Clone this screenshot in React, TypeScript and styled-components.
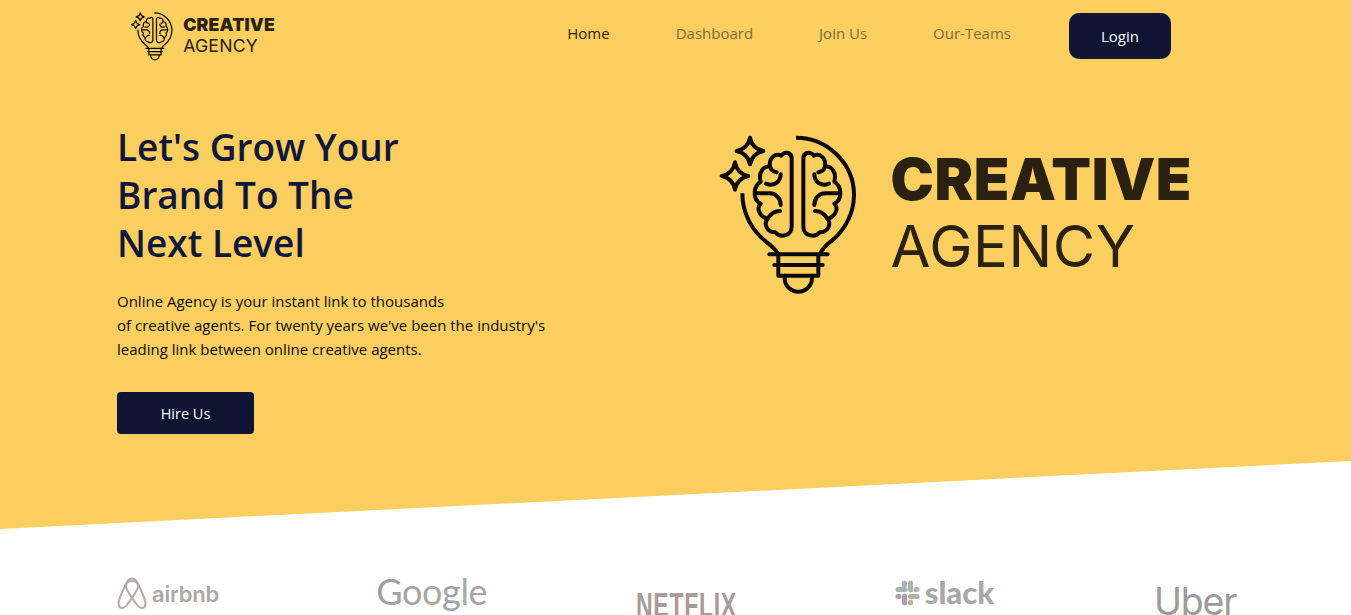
import styled, { createGlobalStyle } from "styled-components";

const navLinks = ["Home", "Dashboard", "Join Us", "Our-Teams"];

const googleLetters = [
    { letter: "G", color: "#9aa1ab" },
    { letter: "o", color: "#a8a3a0" },
    { letter: "o", color: "#aea89c" },
    { letter: "g", color: "#9ca2aa" },
    { letter: "l", color: "#a3aca5" },
    { letter: "e", color: "#aca3a0" },
];

const GlobalStyle = createGlobalStyle`
    html, body {
        margin: 0;
        padding: 0;
        height: 100%;
        overflow: hidden;
        background: #fff;
        font-family: "Open Sans", "Liberation Sans", sans-serif;
    }
    * {
        box-sizing: border-box;
    }
`;

const Page = styled.div`
    width: 100%;
    height: 615px;
    overflow: hidden;
`;

const Hero = styled.section`
    height: 529px;
    background-color: #fbce60;
    clip-path: polygon(0 0, 100% 0, 100% 461px, 0 100%);
`;

const Header = styled.header`
    display: flex;
    height: 72px;
    align-items: center;
    justify-content: space-between;
    padding: 0 180px 0 128px;
`;

const Nav = styled.nav`
    display: flex;
    align-items: center;
`;

const NavLink = styled.a<{ $active?: boolean }>`
    margin-right: 66px;
    font-size: 15px;
    color: ${(p) => (p.$active ? "#2a2414" : "#7d6c3e")};
    text-decoration: none;
    position: relative;
    top: -3px;
    &:nth-child(4) {
        margin-right: 58px;
    }
`;

const LoginButton = styled.button`
    width: 102px;
    height: 46px;
    border: none;
    border-radius: 10px;
    background-color: #0f1432;
    color: #fff;
    font-family: inherit;
    font-size: 15px;
`;

const HeroBody = styled.div`
    display: flex;
    justify-content: space-between;
    padding: 51px 159px 0 117px;
`;

const HeroText = styled.div`
    display: flex;
    flex-direction: column;
    align-items: flex-start;
`;

const Title = styled.h1`
    margin: 0;
    font-size: 37px;
    font-weight: 600;
    line-height: 48px;
    color: #10173a;
`;

const Intro = styled.p`
    margin: 22px 0 0;
    font-size: 15px;
    line-height: 24px;
    color: #0b0b12;
`;

const HireButton = styled.button`
    width: 137px;
    height: 42px;
    margin-top: 31px;
    border: none;
    border-radius: 4px;
    background-color: #0f1432;
    color: #fff;
    font-family: inherit;
    font-size: 14.5px;
`;

const BrandMark = styled.div<{ $scale: number }>`
    display: flex;
    align-items: center;
    gap: ${(p) => 21 * p.$scale}px;
    height: ${(p) => 175 * p.$scale}px;
`;

const HeroMark = styled.div`
    margin-top: 2px;
`;

const BrandWords = styled.div<{ $scale: number }>`
    display: flex;
    flex-direction: column;
    gap: ${(p) => 25 * p.$scale}px;
    font-family: "Inter", "Liberation Sans", sans-serif;
    color: #2a2110;
    font-size: ${(p) => 58 * p.$scale}px;
    line-height: ${(p) => 42 * p.$scale}px;
`;

const BrandTop = styled.span`
    font-weight: 900;
    letter-spacing: 0.01em;
`;

const BrandBottom = styled.span`
    font-weight: 400;
    letter-spacing: 0.01em;
`;

const Clients = styled.div`
    display: flex;
    justify-content: space-between;
    align-items: flex-start;
    padding: 0 117px;
`;

const Client = styled.div<{ $top: number; $color: string; $width: number }>`
    display: flex;
    align-items: center;
    width: ${(p) => p.$width}px;
    margin-top: ${(p) => p.$top}px;
    color: ${(p) => p.$color};
    line-height: 1;
`;

const AirbnbWord = styled.span`
    margin-left: 5px;
    font-family: "Inter", sans-serif;
    font-size: 22px;
    font-weight: 600;
    letter-spacing: -0.01em;
`;

const GoogleWord = styled.span`
    font-family: "Lato", sans-serif;
    font-size: 36px;
    letter-spacing: -0.01em;
`;

const GoogleLetter = styled.span<{ $color: string }>`
    color: ${(p) => p.$color};
`;

const NetflixWord = styled.span`
    display: inline-block;
    font-family: "Liberation Sans", sans-serif;
    font-size: 35px;
    font-weight: 700;
    letter-spacing: 1px;
    white-space: nowrap;
    transform: scaleX(0.66);
    transform-origin: left center;
`;

const SlackWord = styled.span`
    margin-left: 5px;
    font-family: "Lato", sans-serif;
    font-size: 31px;
    font-weight: 900;
`;

const UberWord = styled.span`
    font-family: "Inter", sans-serif;
    font-size: 37.5px;
    font-weight: 400;
    letter-spacing: -0.03em;
`;

function BulbIcon({ size }: { size: number }) {
    const half = (
        <>
            <path d="M245 100V305C245 332 212 340 196 322C172 322 160 298 172 282C148 274 138 250 152 236C128 224 128 184 152 170C144 142 160 124 180 124C176 98 196 84 214 92C226 76 245 84 245 100Z" />
            <path d="M180 124C182 134 190 140 200 142" />
            <path d="M212 148C212 170 192 186 168 176" />
            <path d="M140 205H178C200 205 212 222 212 240" />
            <path d="M172 282C184 262 196 258 210 258" />
        </>
    );

    return (
        <svg
            width={size}
            height={(size * 525) / 480}
            viewBox="0 0 480 525"
            fill="none"
            stroke="#0a0804"
            strokeWidth="12"
            strokeLinecap="round"
            strokeLinejoin="round"
        >
            <path d="M120 38Q126 71 160 78Q127 85 120 118Q113 85 80 78Q114 71 120 38Z" />
            <path d="M75 112Q81 146 115 153Q81 160 75 194Q69 160 35 153Q69 146 75 112Z" />
            <path d="M258 38C352 38 432 115 432 210C432 268 402 318 362 350C346 362 336 372 330 388" strokeLinecap="butt" />
            <path d="M97 205C97 268 128 318 168 350C184 362 196 372 205 388" strokeLinecap="butt" />
            {half}
            <g transform="translate(525 0) scale(-1 1)">{half}</g>
            <path d="M178 388H353M193 420H338M205 388V452H325V388" />
            <path d="M224 452V460A41 40 0 0 0 306 460V452" />
        </svg>
    );
}

function Brand({ scale }: { scale: number }) {
    return (
        <BrandMark $scale={scale}>
            <BulbIcon size={160 * scale} />
            <BrandWords $scale={scale}>
                <BrandTop>CREATIVE</BrandTop>
                <BrandBottom>AGENCY</BrandBottom>
            </BrandWords>
        </BrandMark>
    );
}

function AirbnbIcon() {
    return (
        <svg width="30" height="34" viewBox="0 0 30 34" fill="none" stroke="#b5a9a9" strokeWidth="2" style={{ flexShrink: 0 }}>
            <path d="M15 21C11 15 9 12 9 9.5C9 6 11.5 4 15 4C18.5 4 21 6 21 9.5C21 12 19 15 15 21C11 27 8 31 5.5 31C3 31 1.5 29 1.5 26.5C1.5 23 6 13 10 5C11 3 13 1.5 15 1.5C17 1.5 19 3 20 5C24 13 28.5 23 28.5 26.5C28.5 29 27 31 24.500 31C22 31 19 27 15 21Z" />
        </svg>
    );
}

function SlackIcon() {
    return (
        <svg width="25" height="26" viewBox="0 0 25 26" fill="none" strokeWidth="5" strokeLinecap="round" style={{ flexShrink: 0 }}>
            <path d="M3 9.5H10" stroke="#a3b5b7" />
            <path d="M9.500 3V5" stroke="#a3b5b7" />
            <path d="M15.500 3V10" stroke="#a9b6a9" />
            <path d="M22 9.500H21" stroke="#a9b6a9" />
            <path d="M15.500 16.500H22" stroke="#baaf9c" />
            <path d="M15.500 23V22" stroke="#baaf9c" />
            <path d="M9.500 16V23" stroke="#b0a0ab" />
            <path d="M3 16.500H4" stroke="#b0a0ab" />
        </svg>
    );
}

export default function App() {
    return (
        <Page>
            <GlobalStyle />
            <Hero>
                <Header>
                    <Brand scale={0.305} />
                    <Nav>
                        {navLinks.map((link, i) => (
                            <NavLink href="#" key={link} $active={i === 0}>
                                {link}
                            </NavLink>
                        ))}
                        <LoginButton>Login</LoginButton>
                    </Nav>
                </Header>
                <HeroBody>
                    <HeroText>
                        <Title>
                            Let's Grow Your
                            <br />
                            Brand To The
                            <br />
                            Next Level
                        </Title>
                        <Intro>
                            Online Agency is your instant link to thousands
                            <br />
                            of creative agents. For twenty years we've been the industry's
                            <br />
                            leading link between online creative agents.
                        </Intro>
                        <HireButton>Hire Us</HireButton>
                    </HeroText>
                    <HeroMark>
                        <Brand scale={1} />
                    </HeroMark>
                </HeroBody>
            </Hero>
            <Clients>
                <Client $top={48} $color="#b0a6a6" $width={100}>
                    <AirbnbIcon />
                    <AirbnbWord>airbnb</AirbnbWord>
                </Client>
                <Client $top={44} $color="#9aa1ab" $width={100}>
                    <GoogleWord>
                        {googleLetters.map((item, i) => (
                            <GoogleLetter key={i} $color={item.color}>
                                {item.letter}
                            </GoogleLetter>
                        ))}
                    </GoogleWord>
                </Client>
                <Client $top={58} $color="#aa9b9b" $width={100}>
                    <NetflixWord>NETFLIX</NetflixWord>
                </Client>
                <Client $top={48} $color="#a8a8a8" $width={100}>
                    <SlackIcon />
                    <SlackWord>slack</SlackWord>
                </Client>
                <Client $top={54} $color="#9c9c9c" $width={80}>
                    <UberWord>Uber</UberWord>
                </Client>
            </Clients>
        </Page>
    );
}
